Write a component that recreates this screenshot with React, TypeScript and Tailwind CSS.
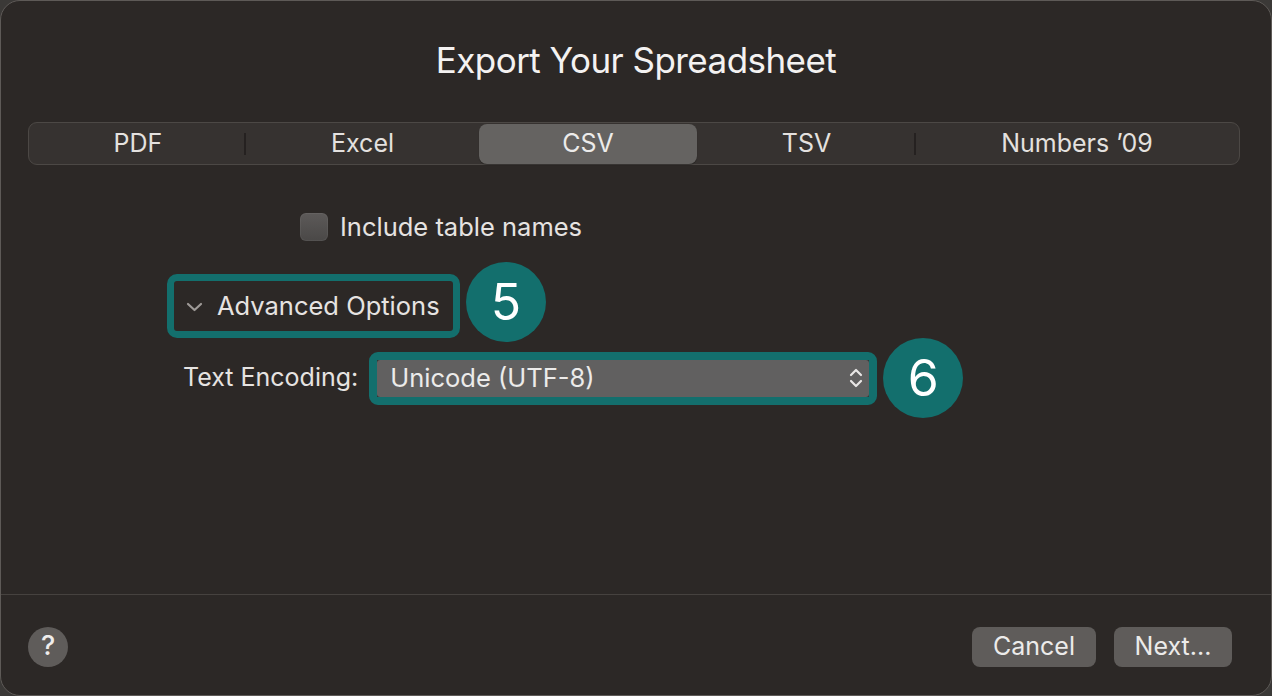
import React from "react";

const font = { fontFamily: "Inter, 'Noto Sans', 'Liberation Sans', sans-serif" };

function Segment({ label, w, selected, divider }: { label: string; w: string; selected?: boolean; divider?: boolean }) {
  return (
    <div className={`relative flex h-full items-center justify-center ${w}`}>
      {selected ? (
        <div className="flex h-[40px] w-full items-center justify-center rounded-[8px] bg-[#656361] text-[25px] text-[#ecebea] shadow-[0_1px_1px_rgba(0,0,0,0.3)]">
          {label}
        </div>
      ) : (
        <span className="text-[25px] text-[#e4e1df]">{label}</span>
      )}
      {divider && <div className="absolute right-0 top-[10px] h-[22px] w-[2px] bg-[#252120]" />}
    </div>
  );
}

export default function App() {
  return (
    <div style={font} className="h-[696px] w-[1272px] bg-[#3b3937]">
      <div className="flex h-full w-full flex-col rounded-[20px] border border-[#5e5a57] bg-[#2c2826]">
        <div className="pt-[37px] text-center text-[35px] leading-[44px] tracking-[-0.55px] text-[#f4f2f1]">
          Export Your Spreadsheet
        </div>

        <div className="ml-[27px] mr-[31px] mt-[40px] flex h-[43px] items-center rounded-[9px] border border-[#4c4845] bg-[#363230] px-px">
          <Segment label="PDF" w="w-[216px]" divider />
          <Segment label="Excel" w="w-[233px]" />
          <Segment label="CSV" w="w-[218px]" selected />
          <Segment label="TSV" w="w-[219px]" divider />
          <Segment label="Numbers ’09" w="flex-1" />
        </div>

        <div className="flex flex-1 flex-col">
          <div className="ml-[299px] mt-[47px] flex h-[30px] items-center gap-[12px]">
            <div className="h-[28px] w-[28px] rounded-[6px] bg-gradient-to-b from-[#5d5a59] to-[#4a4847] shadow-[inset_0_0_0_1px_rgba(255,255,255,0.05)]" />
            <span className="text-[25.5px] text-[#e6e3e1]">Include table names</span>
          </div>

          <div className="ml-[166px] mt-[20px] flex items-start gap-[6px]">
            <div className="mt-[12px] flex h-[64px] w-[293px] items-center rounded-[10px] border-[7px] border-[#136f6d] bg-[#2c2826] pl-[12px]">
              <svg width="17" height="10" viewBox="0 0 17 10" className="mr-[14px] mt-[2px]">
                <path d="M2 2 L8.5 8 L15 2" fill="none" stroke="#9e9a97" strokeWidth="2.2" strokeLinecap="round" strokeLinejoin="round" />
              </svg>
              <span className="text-[25.5px] text-[#e6e3e1]">Advanced Options</span>
            </div>
            <div className="flex h-[80px] w-[80px] items-center justify-center rounded-full bg-[#136f6d] text-[50px] text-white">
              5
            </div>
          </div>

          <div className="-mt-[4px] ml-[182px] flex items-center">
            <span className="mr-[11px] text-[25px] text-[#e6e3e1]">Text Encoding:</span>
            <div className="flex h-[53px] w-[508px] items-center rounded-[9px] border-[8px] border-[#136f6d]">
              <div className="flex h-[37px] flex-1 items-center justify-between rounded-[3px] bg-[#616060] pl-[13px] pr-[5px]">
                <span className="text-[25.5px] text-[#ecebea]">Unicode (UTF-8)</span>
                <svg width="16" height="22" viewBox="0 0 16 22">
                  <path d="M3 8 L8 3 L13 8" fill="none" stroke="#e8e6e5" strokeWidth="2.2" strokeLinecap="round" strokeLinejoin="round" />
                  <path d="M3 14 L8 19 L13 14" fill="none" stroke="#e8e6e5" strokeWidth="2.2" strokeLinecap="round" strokeLinejoin="round" />
                </svg>
              </div>
            </div>
            <div className="ml-[6px] flex h-[80px] w-[80px] items-center justify-center rounded-full bg-[#136f6d] text-[50px] text-white">
              6
            </div>
          </div>
        </div>

        <div className="h-px bg-[#46423f]" />
        <div className="flex h-[100px] items-center justify-between pl-[27px] pr-[39px] pt-[3px]">
          <div className="flex h-[40px] w-[40px] items-center justify-center rounded-full bg-[#5f5c5a] text-[27px] font-medium text-[#efedec]">
            ?
          </div>
          <div className="flex items-center gap-[18px]">
            <div className="flex h-[40px] w-[124px] items-center justify-center rounded-[8px] bg-[#5f5c5a] text-[25px] text-[#ecebea]">
              Cancel
            </div>
            <div className="flex h-[40px] w-[118px] items-center justify-center rounded-[8px] bg-[#5f5c5a] text-[25px] text-[#ecebea]">
              Next...
            </div>
          </div>
        </div>
      </div>
    </div>
  );
}
